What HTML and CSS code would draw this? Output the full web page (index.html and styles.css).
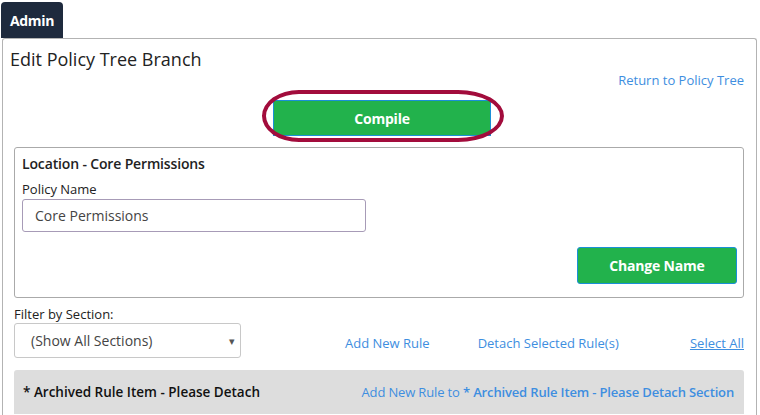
FILE: index.html
```html
<!DOCTYPE html>
<html>
<head>
<meta charset="utf-8">
<link rel="stylesheet" href="styles.css">
</head>
<body>
<div class="page">
  <div class="tab">Admin</div>
  <div class="panel">
    <h1 class="title">Edit Policy Tree Branch</h1>
    <div class="return-row"><a class="link">Return to Policy Tree</a></div>
    <div class="compile-row">
      <div class="compile-wrap">
        <button class="btn compile">Compile</button>
        <span class="annot"></span>
      </div>
    </div>
    <div class="box">
      <div class="box-title">Location - Core Permissions</div>
      <div class="label">Policy Name</div>
      <div class="input">Core Permissions</div>
      <div class="box-actions"><button class="btn change">Change Name</button></div>
    </div>
    <div class="filter-label">Filter by Section:</div>
    <div class="filter-row">
      <div class="select"><span>(Show All Sections)</span><span class="caret">&#9662;</span></div>
      <div class="actions">
        <a class="link add">Add New Rule</a>
        <a class="link detach">Detach Selected Rule(s)</a>
        <a class="link under">Select All</a>
      </div>
    </div>
    <div class="section">
      <span class="section-title">* Archived Rule Item - Please Detach</span>
      <span class="link sec-link">Add New Rule to <b>* Archived Rule Item - Please Detach Section</b></span>
    </div>
  </div>
</div>
</body>
</html>
```
FILE: styles.css
```css
html, body { margin: 0; padding: 0; background: #fff; }
body { font-family: "Open Sans", "Noto Sans", sans-serif; color: #222; overflow: hidden; }
.page { width: 760px; height: 415px; padding-top: 2px; box-sizing: border-box; overflow: hidden; }
.tab {
  margin-left: 1px; width: 62px; height: 36px; box-sizing: border-box;
  background: #1e2a3d; color: #fff; font-weight: 700; font-size: 14px;
  border-radius: 4px 4px 0 0; display: flex; align-items: center; justify-content: center;
  letter-spacing: -0.3px;
}
.panel {
  margin-left: 2px; width: 755px; box-sizing: border-box; height: 377px; overflow: hidden;
  border: 1px solid #b3b3b3; border-bottom: none; border-radius: 3px 3px 0 0;
  padding: 0 12px 0 11px;
}
.title { margin: 0 0 0 -4px; font-size: 18px; font-weight: 400; color: #222; padding-top: 8px; line-height: 24px; }
.return-row { display: flex; justify-content: flex-end; margin-top: 0; }
.link { color: #3e8ee0; font-size: 13px; line-height: 18px; }
.compile-row { display: flex; justify-content: center; margin-top: 11px; padding-left: 6px; }
.compile-wrap { position: relative; }
.btn {
  font-family: inherit; background: #22b24c; color: #fff; font-weight: 700; font-size: 14px;
  border: 1px solid #1a8fd8; border-radius: 0; cursor: pointer; letter-spacing: -0.2px;
}
.compile { width: 218px; height: 36px; display: block; }
.annot {
  position: absolute; left: -11px; top: -10px; width: 242px; height: 52px;
  border: 4px solid #a20c3c; border-radius: 37px 46px 46px 37px / 26px; box-sizing: border-box; pointer-events: none;
}
.box {
  margin-top: 11px; border: 1px solid #aaa; border-radius: 3px; height: 151px; box-sizing: border-box;
  padding: 6px 6px 0 7px;
}
.box-title { font-size: 14px; font-weight: 600; color: #222; line-height: 19px; letter-spacing: -0.15px; }
.label { font-size: 13px; color: #222; margin-top: 7px; line-height: 18px; }
.input {
  margin-top: 1px; width: 344px; height: 33px; box-sizing: border-box; border: 1px solid #a79bb7;
  border-radius: 3px; padding-left: 12px; font-size: 14px; color: #444; display: flex; align-items: center;
}
.box-actions { display: flex; justify-content: flex-end; margin-top: 15px; }
.change { width: 160px; height: 37px; border-radius: 3px; }
.filter-label { font-size: 13px; margin-top: 7px; line-height: 18px; color: #222; }
.filter-row { display: flex; align-items: flex-end; margin-top: 0; }
.select {
  width: 227px; height: 35px; box-sizing: border-box; border: 1px solid #c8c8c8; border-radius: 3px;
  display: flex; align-items: center; justify-content: space-between; padding: 0 5px 0 16px;
  font-size: 14px; color: #444;
}
.caret { font-size: 11px; color: #555; }
.actions { flex: 1; display: flex; align-items: center; padding-bottom: 6px; }
.add { margin-left: 104px; }
.detach { margin-left: 48px; }
.under { margin-left: auto; text-decoration: underline; }
.section {
  margin-top: 12px; background: #dddddd; border-radius: 3px 3px 0 0; height: 44px;
  display: flex; justify-content: space-between; align-items: center; padding: 0 10px 0 9px;
}
.section-title { font-size: 13.5px; font-weight: 600; color: #111; }
.sec-link { letter-spacing: -0.15px; }
.sec-link b { font-weight: 600; }
```
